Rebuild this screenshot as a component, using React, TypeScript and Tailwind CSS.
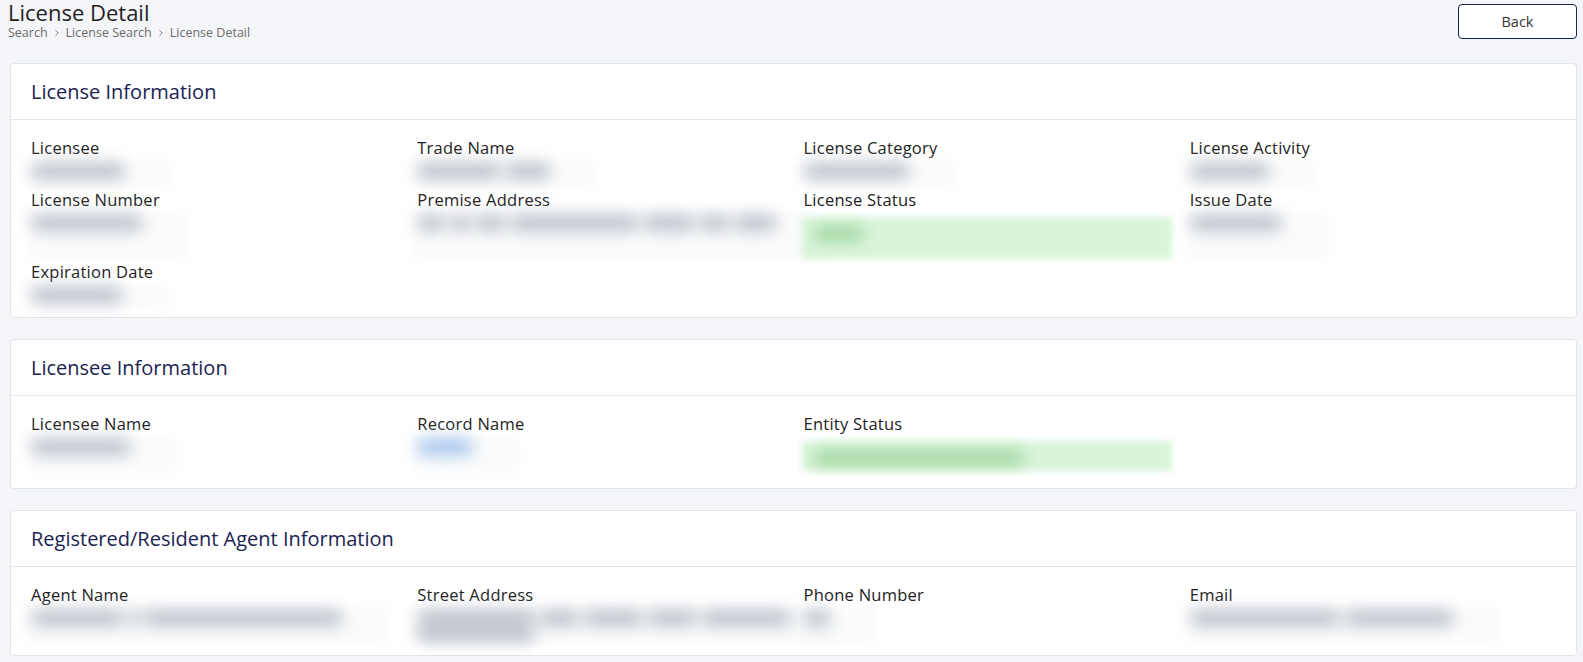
import type { ReactNode } from "react";
import { ChevronRight } from "lucide-react";

// a redacted line is a list of word widths
type Value =
  | { kind: "text"; lines: number[][]; tone?: "gray" | "blue" }
  | { kind: "badge"; width: number };

type Field = {
  label: string;
  value: Value;
  height: number;
};

type Section = {
  title: string;
  rows: Field[][];
  bodyClass: string;
};

const sections: Section[] = [
  {
    title: "License Information",
    bodyClass: "pb-[6px]",
    rows: [
      [
        { label: "Licensee", value: { kind: "text", lines: [[94]] }, height: 30 },
        { label: "Trade Name", value: { kind: "text", lines: [[84, 46]] }, height: 30 },
        { label: "License Category", value: { kind: "text", lines: [[106]] }, height: 30 },
        { label: "License Activity", value: { kind: "text", lines: [[80]] }, height: 30 },
      ],
      [
        { label: "License Number", value: { kind: "text", lines: [[112]] }, height: 50 },
        {
          label: "Premise Address",
          value: { kind: "text", lines: [[28, 22, 30, 130, 52, 30, 44]] },
          height: 50,
        },
        { label: "License Status", value: { kind: "badge", width: 50 }, height: 50 },
        { label: "Issue Date", value: { kind: "text", lines: [[92]] }, height: 50 },
      ],
      [{ label: "Expiration Date", value: { kind: "text", lines: [[92]] }, height: 28 }],
    ],
  },
  {
    title: "Licensee Information",
    bodyClass: "pb-[15px]",
    rows: [
      [
        { label: "Licensee Name", value: { kind: "text", lines: [[100]] }, height: 38 },
        {
          label: "Record Name",
          value: { kind: "text", lines: [[56]], tone: "blue" },
          height: 38,
        },
        { label: "Entity Status", value: { kind: "badge", width: 210 }, height: 38 },
      ],
    ],
  },
  {
    title: "Registered/Resident Agent Information",
    bodyClass: "pb-[11px]",
    rows: [
      [
        { label: "Agent Name", value: { kind: "text", lines: [[92, 12, 200]] }, height: 38 },
        {
          label: "Street Address",
          value: { kind: "text", lines: [[118, 40, 60, 50, 90], [118]] },
          height: 38,
        },
        { label: "Phone Number", value: { kind: "text", lines: [[26]] }, height: 38 },
        { label: "Email", value: { kind: "text", lines: [[150, 110]] }, height: 38 },
      ],
    ],
  },
];

function lineWidth(words: number[]) {
  return words.reduce((sum, w) => sum + w, 0) + (words.length - 1) * 4;
}

// redacted values: smeared words that stand in for the hidden text
function MaskedValue({ value, height }: { value: Value; height: number }) {
  if (value.kind === "badge") {
    return (
      <div className="relative" style={{ height }}>
        <div className="absolute -left-[2px] top-[6px] right-[18px] bottom-[2px] bg-[#d9f4d9] blur-[3px]" />
        <div
          className="absolute left-[10px] top-[15px] h-[16px] rounded-full bg-[#a6d9a6] blur-[7px]"
          style={{ width: value.width }}
        />
      </div>
    );
  }

  const word = value.tone === "blue" ? "bg-[#a2c3ec]" : "bg-gray-400/65";
  const widest = Math.max(...value.lines.map(lineWidth));

  return (
    <div className="relative" style={{ height }}>
      <div
        className="absolute -left-[4px] top-[1px] bg-gray-100/40 blur-[4px]"
        style={{ width: widest + 50, height: height - 2 }}
      />
      {value.lines.map((words, i) => (
        <div
          key={i}
          className="absolute left-0 flex gap-[4px]"
          style={{ top: 4 + i * 16 }}
        >
          {words.map((w, j) => (
            <div
              key={j}
              className={`h-[16px] rounded-full ${word} blur-[8px]`}
              style={{ width: w }}
            />
          ))}
        </div>
      ))}
    </div>
  );
}

function Card({ title, children }: { title: string; children: ReactNode }) {
  return (
    <section className="rounded-[4px] border border-[#e1e4ea] bg-white">
      <header className="flex h-[56px] items-center border-b border-[#e1e4ea] px-5">
        <h2 className="text-[20px] font-medium text-[#1b2452]">{title}</h2>
      </header>
      {children}
    </section>
  );
}

export default function App() {
  return (
    <div
      className="min-h-screen bg-[#f4f5f9] pl-2 pr-[6px] text-[#262626]"
      style={{ fontFamily: '"Open Sans", "Noto Sans", sans-serif' }}
    >
      <div className="flex items-start justify-between">
        <div>
          <h1 className="text-[22px] leading-[24px] text-[#1f1f1f]">License Detail</h1>
          <nav className="mt-[1px] flex items-center gap-[4px] text-[12.5px] leading-[16px] text-[#6b6b6b]">
            <span>Search</span>
            <ChevronRight className="h-[10px] w-[10px]" strokeWidth={2} />
            <span>License Search</span>
            <ChevronRight className="h-[10px] w-[10px]" strokeWidth={2} />
            <span>License Detail</span>
          </nav>
        </div>
        <button className="mt-[4px] h-[35px] w-[119px] rounded-[4px] border border-[#1b2452] bg-white text-[14.5px] text-[#333]">
          Back
        </button>
      </div>

      <div className="ml-[2px] mt-[22px] flex flex-col gap-[21px]">
        {sections.map((section) => (
          <Card key={section.title} title={section.title}>
            <div className={`flex flex-col pl-5 pt-[17px] ${section.bodyClass}`}>
              {section.rows.map((row, r) => (
                <div key={r} className="grid grid-cols-4">
                  {row.map((field) => (
                    <div key={field.label}>
                      <div className="text-[16.5px] leading-[22px] tracking-[0.015em] text-[#222]">
                        {field.label}
                      </div>
                      <MaskedValue value={field.value} height={field.height} />
                    </div>
                  ))}
                </div>
              ))}
            </div>
          </Card>
        ))}
      </div>
    </div>
  );
}
